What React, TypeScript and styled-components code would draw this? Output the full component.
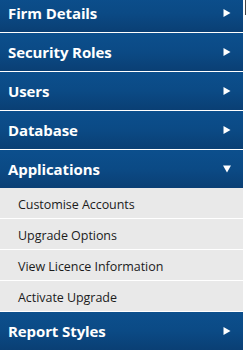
import styled, { createGlobalStyle } from "styled-components"

const GlobalStyle = createGlobalStyle`
  html, body {
    margin: 0;
    padding: 0;
    background: #ffffff;
  }
  body {
    font-family: "Open Sans", "DejaVu Sans", sans-serif;
    overflow: hidden;
  }
`

const Page = styled.div`
  display: flex;
  width: 246px;
  height: 355px;
  overflow: hidden;
`

const Menu = styled.ul`
  list-style: none;
  margin: -6px 0 0;
  padding: 0;
  width: 243px;
  flex: none;
`

const Side = styled.div`
  flex: 1;
  display: flex;
  justify-content: flex-end;
  align-items: flex-start;
`

const SideEdge = styled.div`
  width: 1px;
  height: 15px;
  background: #4a4a4a;
`

const Section = styled.li<{ $open?: boolean }>`
  border-bottom: ${(p) => (p.$open ? "0" : "1px solid #ffffff")};
`

const Header = styled.div`
  height: 38px;
  display: flex;
  align-items: center;
  justify-content: space-between;
  padding: 0 12px 0 8px;
  background: linear-gradient(to bottom, #0c4f8d 0%, #0b4a85 50%, #0a3f74 100%);
  color: #ffffff;
  font-size: 15px;
  font-weight: 700;
  letter-spacing: -0.1px;
`

const Arrow = styled.svg`
  width: 8px;
  height: 8px;
  flex: none;
`

const SubList = styled.ul`
  list-style: none;
  margin: 0;
  padding: 0;
  background: #e9e9e9;
`

const SubItem = styled.li`
  height: 28px;
  padding: 2px 0 0 18px;
  display: flex;
  align-items: center;
  border-bottom: 1px solid #ffffff;
  color: #1c1c1c;
  font-size: 12.5px;
  letter-spacing: -0.05px;
`

const sections = [
  { title: "Firm Details" },
  { title: "Security Roles" },
  { title: "Users" },
  { title: "Database" },
  {
    title: "Applications",
    items: [
      "Customise Accounts",
      "Upgrade Options",
      "View Licence Information",
      "Activate Upgrade",
    ],
  },
  { title: "Report Styles" },
]

function Caret({ open }: { open?: boolean }) {
  return (
    <Arrow viewBox="0 0 8 8">
      {open ? (
        <polygon points="0,0.5 8,0.5 4,7.5" fill="#ffffff" />
      ) : (
        <polygon points="0.5,0 7.5,4 0.5,8" fill="#ffffff" />
      )}
    </Arrow>
  )
}

export default function App() {
  return (
    <>
      <GlobalStyle />
      <Page>
        <Menu>
          {sections.map((s) => (
            <Section key={s.title} $open={!!s.items}>
              <Header>
                <span>{s.title}</span>
                <Caret open={!!s.items} />
              </Header>
              {s.items && (
                <SubList>
                  {s.items.map((it) => (
                    <SubItem key={it}>{it}</SubItem>
                  ))}
                </SubList>
              )}
            </Section>
          ))}
        </Menu>
        <Side>
          <SideEdge />
        </Side>
      </Page>
    </>
  )
}
